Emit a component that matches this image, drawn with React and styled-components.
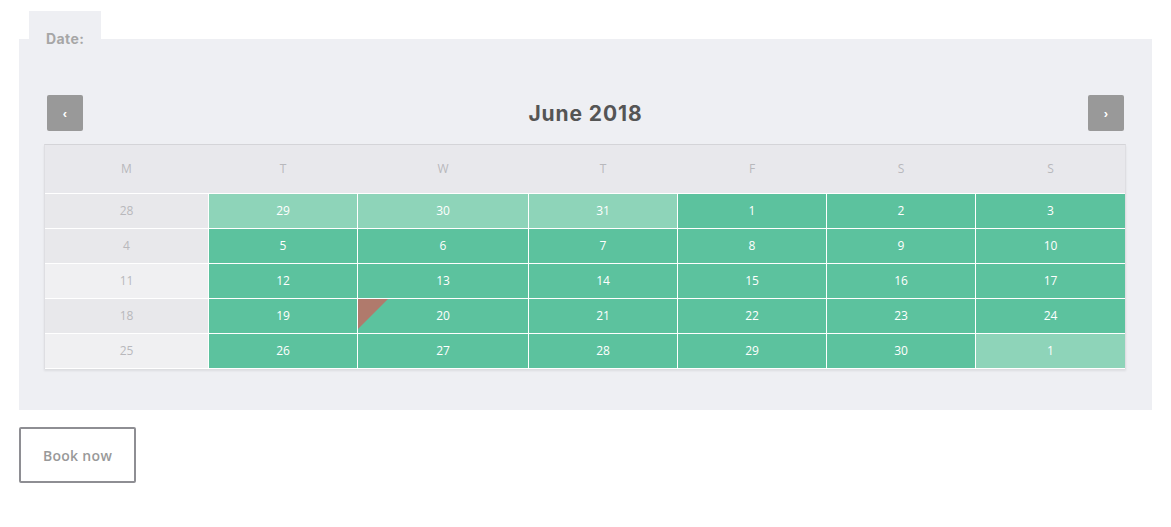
import styled, { createGlobalStyle } from "styled-components";

const GlobalStyle = createGlobalStyle`
  body {
    margin: 0;
    background: #ffffff;
    font-family: "Open Sans", "Liberation Sans", sans-serif;
  }
`;

const Page = styled.div`
  padding: 11px 19px 0 19px;
  width: 1133px;
`;

const Tab = styled.div`
  margin-left: 10px;
  width: 72px;
  height: 28px;
  background: #eeeff3;
  color: #a6a6a6;
  font-family: Inter, sans-serif;
  font-size: 14px;
  font-weight: 700;
  letter-spacing: 0.4px;
  padding: 20px 0 0 17px;
  box-sizing: border-box;
  line-height: 16px;
`;

const Panel = styled.div`
  background: #eeeff3;
  padding: 56px 26px 41px 25px;
`;

const Header = styled.div`
  display: flex;
  align-items: center;
  justify-content: space-between;
  padding: 0 2px 0 3px;
  margin-bottom: 13px;
`;

const NavButton = styled.button`
  width: 36px;
  height: 36px;
  border: none;
  border-radius: 2px;
  background: #999999;
  color: #ffffff;
  font-size: 13px;
  font-weight: 700;
  padding: 0;
  display: flex;
  align-items: center;
  justify-content: center;
  cursor: pointer;
`;

const Title = styled.div`
  font-family: Inter, sans-serif;
  font-size: 21px;
  font-weight: 700;
  color: #555555;
  letter-spacing: 0.9px;
`;

const Table = styled.div`
  border-top: 1px solid #d4d4d8;
  border-left: 1px solid #dedee2;
  border-right: 1px solid #dedee2;
  background: #ffffff;
  box-shadow: 0 2px 2px rgba(0, 0, 0, 0.08);
`;

const cols = "163px 148px 170px 148px 148px 148px 149px";

const HeadRow = styled.div`
  display: grid;
  grid-template-columns: ${cols};
  column-gap: 1px;
  height: 48px;
  background: #e8e8ec;
`;

const HeadCell = styled.div`
  display: flex;
  align-items: center;
  justify-content: center;
  padding-bottom: 2px;
  color: #b8b8bc;
  font-size: 12px;
`;

const Body = styled.div`
  display: grid;
  grid-template-columns: ${cols};
  gap: 1px;
  padding: 1px 0;
  background: #ffffff;
`;

const tones = {
  week: "#e8e8eb",
  weekAlt: "#f0f0f2",
  free: "#5cc29e",
  other: "#8ed4b9",
};

const Cell = styled.div`
  position: relative;
  height: 34px;
  box-sizing: border-box;
  padding-bottom: 2px;
  display: flex;
  align-items: center;
  justify-content: center;
  font-size: 12px;
  background: ${(p) => tones[p.$tone]};
  color: ${(p) => (p.$tone === "week" || p.$tone === "weekAlt" ? "#b8b8bc" : "#ffffff")};
  overflow: hidden;
`;

const Corner = styled.div`
  position: absolute;
  left: 0;
  top: 0;
  width: 0;
  height: 0;
  border-top: 30px solid #b07a6c;
  border-right: 30px solid transparent;
`;

const BookButton = styled.button`
  margin-top: 17px;
  width: 117px;
  height: 56px;
  background: #ffffff;
  border: 2px solid #8e8e93;
  border-radius: 2px;
  color: #999999;
  font-family: "Open Sans", sans-serif;
  font-size: 14px;
  font-weight: 600;
  letter-spacing: 0.3px;
  cursor: pointer;
`;

const days = ["M", "T", "W", "T", "F", "S", "S"];

const weeks = [
  [28, [29, "other"], [30, "other"], [31, "other"], 1, 2, 3],
  [4, 5, 6, 7, 8, 9, 10],
  [11, 12, 13, 14, 15, 16, 17],
  [18, 19, 20, 21, 22, 23, 24],
  [25, 26, 27, 28, 29, 30, [1, "other"]],
];

const App = () => {
  return (
    <Page>
      <GlobalStyle />
      <Tab>Date:</Tab>
      <Panel>
        <Header>
          <NavButton>‹</NavButton>
          <Title>June 2018</Title>
          <NavButton>›</NavButton>
        </Header>
        <Table>
          <HeadRow>
            {days.map((d, i) => (
              <HeadCell key={i}>{d}</HeadCell>
            ))}
          </HeadRow>
          <Body>
            {weeks.map((week, r) =>
              week.map((item, c) => {
                const [num, kind] = Array.isArray(item) ? item : [item, null];
                const tone =
                  c === 0 ? (r % 2 === 0 && r > 0 ? "weekAlt" : "week") : kind || "free";
                return (
                  <Cell key={`${r}-${c}`} $tone={tone}>
                    {r === 3 && c === 2 && <Corner />}
                    {num}
                  </Cell>
                );
              })
            )}
          </Body>
        </Table>
      </Panel>
      <BookButton>Book now</BookButton>
    </Page>
  );
};

export default App;
